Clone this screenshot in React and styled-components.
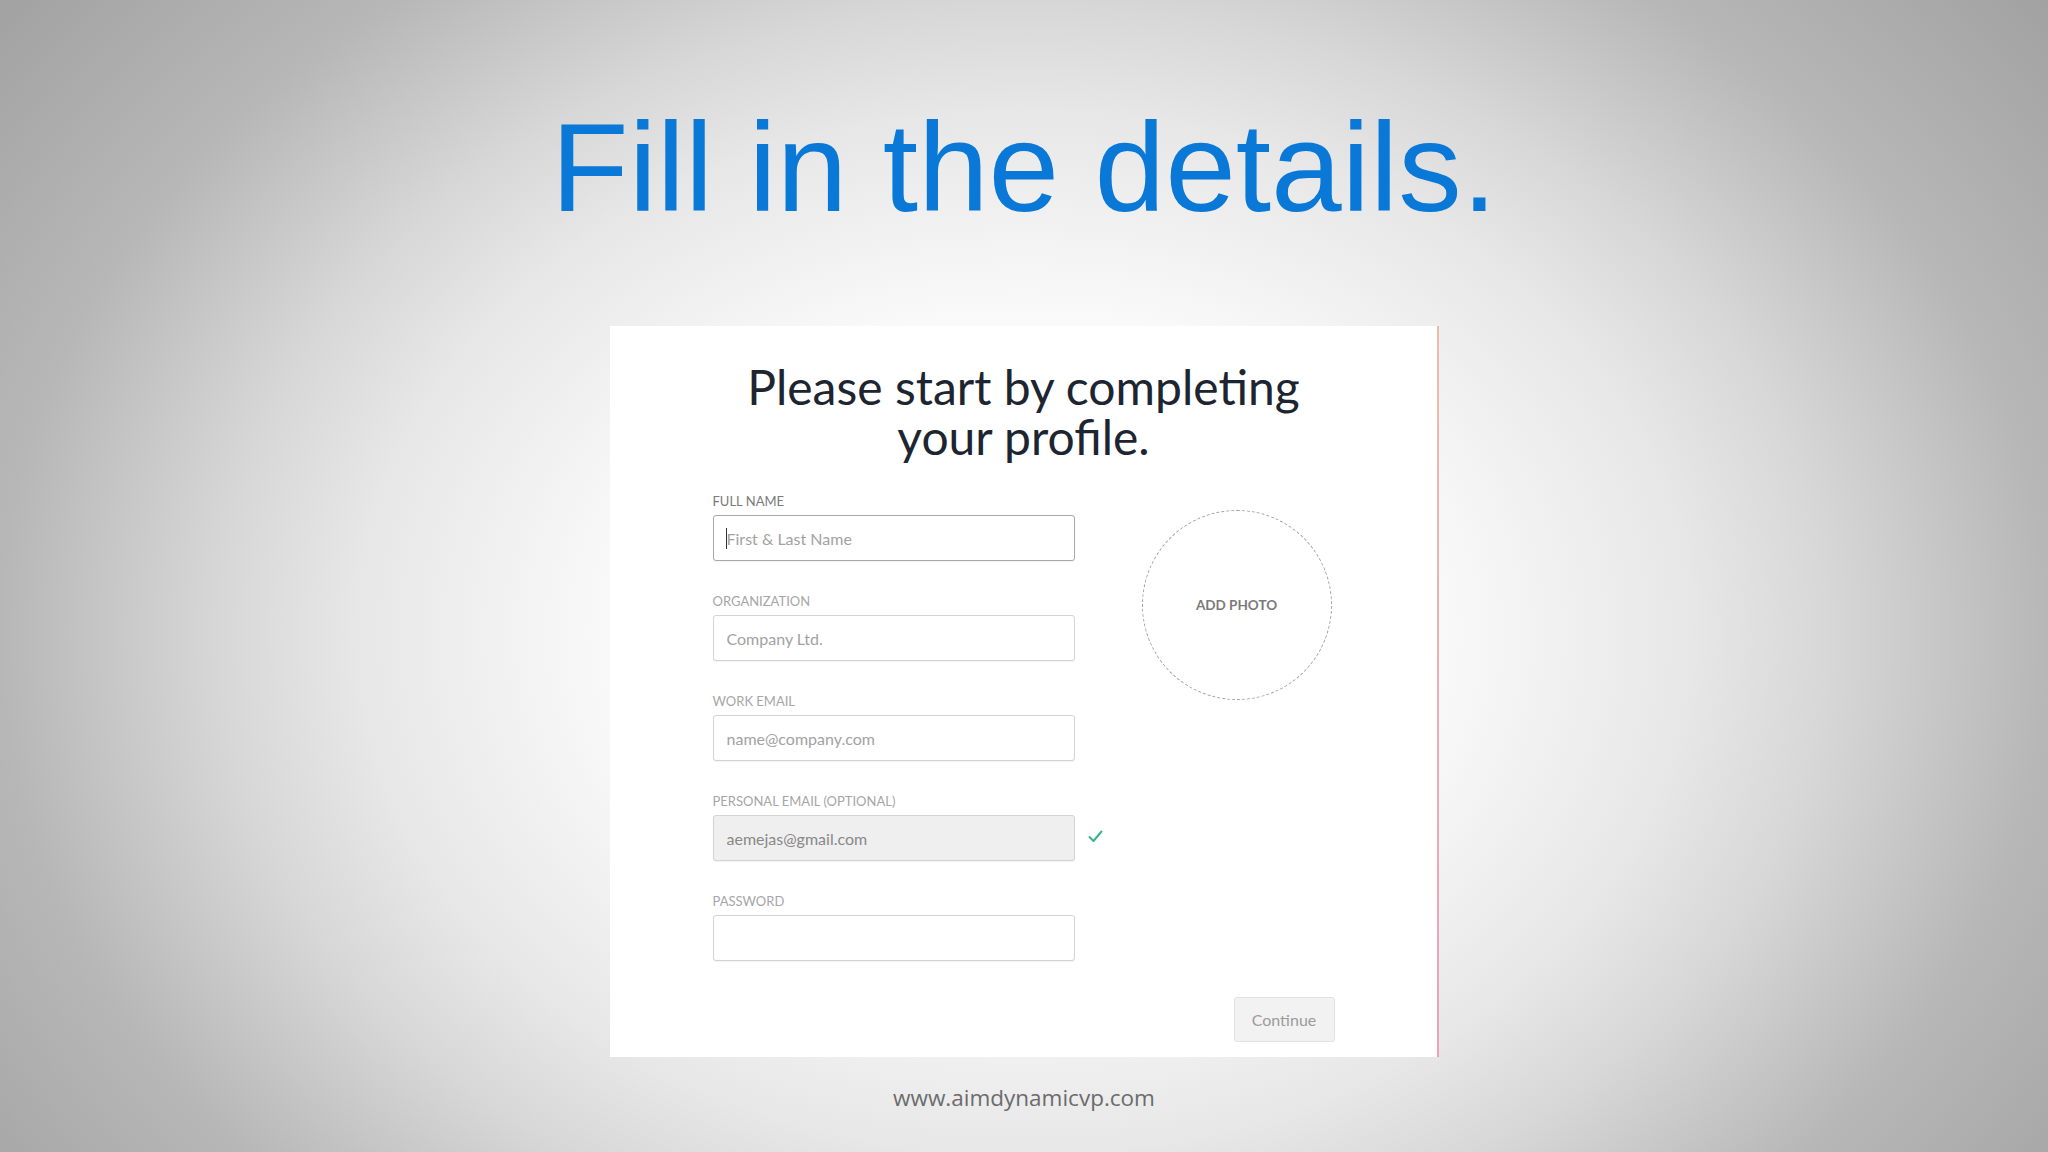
import React from 'react';
import styled, { createGlobalStyle } from 'styled-components';

const Global = createGlobalStyle`
  html, body {
    margin: 0;
    padding: 0;
  }
  body {
    width: 2048px;
    height: 1152px;
    overflow: hidden;
  }
`;

const Page = styled.div`
  width: 2048px;
  height: 1152px;
  box-sizing: border-box;
  padding-top: 104px;
  display: flex;
  flex-direction: column;
  align-items: center;
  background: radial-gradient(
    ellipse 1150px 900px at 50% 55%,
    #ffffff 0%,
    #fafafa 35%,
    #e7e7e7 58%,
    #d7d7d7 70%,
    #b7b7b7 89%,
    #a2a2a2 113%
  );
`;

const Title = styled.h1`
  margin: 0;
  font-family: "Liberation Sans", Arial, sans-serif;
  font-weight: 400;
  font-size: 127px;
  line-height: 127px;
  color: #0a78d6;
`;

const Card = styled.div`
  margin-top: 95px;
  width: 829px;
  box-sizing: border-box;
  padding: 36px 102px 15px 103px;
  background: #ffffff;
  border-right: 2px solid;
  border-image: linear-gradient(#ecbcaa, #eca0bc) 1;
  font-family: Lato, "Open Sans", sans-serif;
`;

const Heading = styled.h2`
  margin: 0;
  text-align: center;
  font-family: Lato, sans-serif;
  font-weight: 400;
  font-size: 48px;
  line-height: 50px;
  color: #1d2530;
`;

const FormArea = styled.div`
  margin-top: 31px;
  display: flex;
  align-items: flex-start;
`;

const Fields = styled.div`
  width: 362px;
  display: flex;
  flex-direction: column;
  gap: 32px;
`;

const Field = styled.div`
  display: flex;
  flex-direction: column;
  gap: 6px;
`;

const Label = styled.label`
  font-size: 13px;
  line-height: 16px;
  text-transform: uppercase;
  color: ${p => (p.$active ? '#7a7a7a' : '#a6a6a6')};
`;

const InputWrap = styled.div`
  position: relative;
`;

const Input = styled.input`
  display: block;
  width: 100%;
  height: 46px;
  box-sizing: border-box;
  padding: 0 13px;
  border: 1px solid ${p => (p.$active ? '#a9a9a9' : '#d3d3d3')};
  border-radius: 3px;
  background: ${p => (p.$filled ? '#efefef' : '#ffffff')};
  box-shadow: 0 1px 1px rgba(0, 0, 0, 0.05);
  font-family: Lato, sans-serif;
  font-size: 16px;
  color: #888888;
  outline: none;

  &::placeholder {
    color: #a2a2a2;
  }
`;

const Caret = styled.span`
  position: absolute;
  left: 13px;
  top: 13px;
  width: 1px;
  height: 21px;
  background: #333;
`;

const Check = styled.svg`
  position: absolute;
  left: calc(100% + 13px);
  top: 15px;
`;

const PhotoCircle = styled.div`
  margin-left: 67px;
  margin-top: 17px;
  width: 190px;
  height: 190px;
  box-sizing: border-box;
  border-radius: 50%;
  border: 1px dashed #a0a0a0;
  display: flex;
  align-items: center;
  justify-content: center;
  font-size: 13.5px;
  font-weight: 700;
  color: #7a7a7a;
`;

const Actions = styled.div`
  margin-top: 36px;
  display: flex;
  justify-content: flex-end;
`;

const Button = styled.button`
  width: 101px;
  height: 45px;
  border: 1px solid #e1e1e1;
  border-radius: 3px;
  background: #f2f2f3;
  font-family: Lato, sans-serif;
  font-size: 16px;
  color: #9b9b9b;
  cursor: pointer;
`;

const Footer = styled.div`
  margin-top: 27px;
  font-family: "Open Sans", sans-serif;
  font-size: 22.5px;
  line-height: 28px;
  color: #6b6b6b;
`;

const fields = [
  { label: 'Full Name', placeholder: 'First & Last Name', active: true },
  { label: 'Organization', placeholder: 'Company Ltd.' },
  { label: 'Work Email', placeholder: 'name@company.com' },
  { label: 'Personal Email (optional)', value: 'aemejas@gmail.com', filled: true, valid: true },
  { label: 'Password', type: 'password' },
];

export default function App() {
  return (
    <Page>
      <Global />
      <Title>Fill in the details.</Title>
      <Card>
        <Heading>
          Please start by completing
          <br />
          your profile.
        </Heading>
        <FormArea>
          <Fields>
            {fields.map(f => (
              <Field key={f.label}>
                <Label $active={f.active}>{f.label}</Label>
                <InputWrap>
                  <Input
                    type={f.type || 'text'}
                    placeholder={f.placeholder}
                    defaultValue={f.value}
                    $active={f.active}
                    $filled={f.filled}
                  />
                  {f.active && <Caret />}
                  {f.valid && (
                    <Check width="15" height="13" viewBox="0 0 15 13">
                      <polyline
                        points="1.5,7 5.5,11 13.5,1.5"
                        fill="none"
                        stroke="#36b58b"
                        strokeWidth="2"
                        strokeLinecap="round"
                        strokeLinejoin="round"
                      />
                    </Check>
                  )}
                </InputWrap>
              </Field>
            ))}
          </Fields>
          <PhotoCircle>ADD PHOTO</PhotoCircle>
        </FormArea>
        <Actions>
          <Button>Continue</Button>
        </Actions>
      </Card>
      <Footer>www.aimdynamicvp.com</Footer>
    </Page>
  );
}
